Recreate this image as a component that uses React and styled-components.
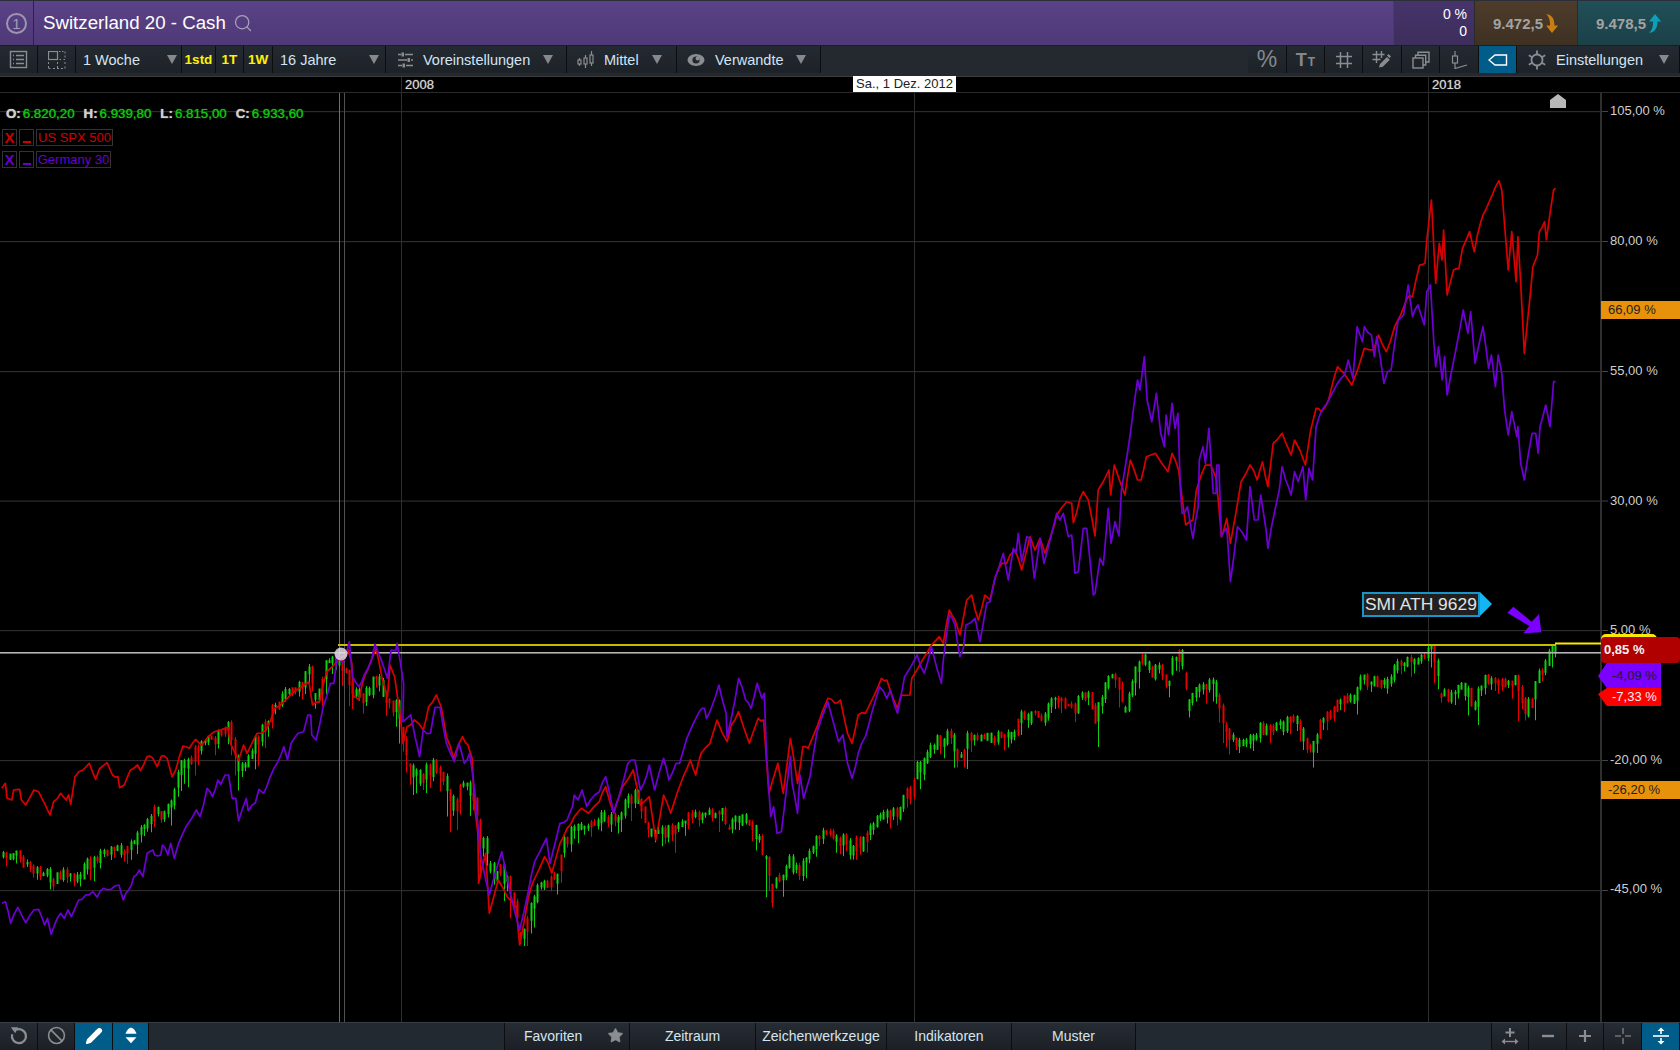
import React from "react";
import styled, { createGlobalStyle } from "styled-components";
import { Pencil, Search, Star, Ban } from "lucide-react";

const Global = createGlobalStyle`
  html, body { margin: 0; padding: 0; background: #000; overflow: hidden; }
  body { font-family: "Liberation Sans", Arial, sans-serif; }
  * { box-sizing: border-box; }
`;

const Page = styled.div`
  width: 1680px; height: 1050px; display: flex; flex-direction: column; background: #000; overflow: hidden;
`;

/* ---------- header ---------- */
const Header = styled.header`
  height: 46px; flex: none; display: flex; align-items: stretch;
  border-top: 1px solid #2b2f3a; border-bottom: 1px solid #1b1e24;
  background: linear-gradient(#5b4287, #4e3976);
`;
const CircleCell = styled.div`
  width: 34px; display: flex; align-items: center; justify-content: center; border-right: 1px solid #2c2340;
`;
const CircleNum = styled.div`
  width: 21px; height: 21px; border-radius: 50%; border: 2px solid #9d96b0; color: #a49db6;
  font-size: 15px; display: flex; align-items: center; justify-content: center;
`;
const Title = styled.div`
  margin-left: 9px; color: #fff; font-size: 18.7px; line-height: 44px;
`;
const SearchWrap = styled.div`
  margin-left: 7px; display: flex; align-items: center; color: #a9a2bb;
`;
const Spacer = styled.div`flex: 1;`;
const Qty = styled.div`
  width: 81px; background: linear-gradient(#46346a, #3d2e5c); color: #fff; font-size: 14px; line-height: 17px;
  display: flex; flex-direction: column; justify-content: center; align-items: flex-end; padding-right: 7px;
  border-left: 1px solid #4a3a70;
`;
const Price = styled.div`
  display: flex; align-items: center; justify-content: center; gap: 2px;
  width: ${p => p.$w}px; border-left: 1px solid #2a2a2a;
  background: ${p => p.$buy ? "linear-gradient(#215058, #1b4048)" : "linear-gradient(#4f3c2b, #3d3122)"};
  color: #a3a3a3; font-size: 15px; font-weight: bold;
`;

/* ---------- toolbar ---------- */
const Toolbar = styled.nav`
  height: 30px; flex: none; display: flex; align-items: flex-start; background: #23292f;
`;
const ToolBtn = styled.div`
  width: ${p => p.$w}px; height: 27px; flex: none; display: flex; align-items: center;
  justify-content: ${p => p.$left ? "flex-start" : "center"};
  padding-left: ${p => p.$pl || 0}px; gap: ${p => p.$gap || 0}px;
  border-right: 1px solid #0b0d10; position: relative;
  background: ${p => p.$active ? "#005c88" : "linear-gradient(#242a31, #1d2227)"};
  color: #d3e4f2; font-size: 14.5px;
`;
const YellowLabel = styled.span`
  color: #fff200; font-size: 13.5px; font-weight: bold;
`;
const Caret = styled.span`
  position: absolute; right: ${p => p.$r || 8}px; top: 9px; width: 0; height: 0;
  border-left: 5px solid transparent; border-right: 5px solid transparent; border-top: 9px solid #85898d;
`;
const ToolSpacer = styled.div`flex: 1; height: 27px;`;
const GrayGlyph = styled.span`
  color: #85898d; font-size: ${p => p.$s || 20}px; font-weight: ${p => p.$b ? "bold" : "normal"}; line-height: 1;
`;
const SmallT = styled.span`font-size: 12px; margin-left: 1px;`;

/* ---------- time row ---------- */
const TimeRow = styled.div`
  height: 17px; flex: none; position: relative; background: #000;
  border-top: 1px solid #3c3c3c; border-bottom: 1px solid #2b2b2b;
`;
const TimeLabel = styled.span`
  position: absolute; left: ${p => p.$x}px; top: 0; height: 15px; padding-left: 3px; border-left: 1px solid #2b2b2b;
  color: #d4d4d4; font-size: 13px; line-height: 15px; text-shadow: 0 0 1px #aaa;
`;
const DateTag = styled.span`
  position: absolute; left: 853px; top: -1px; width: 103px; height: 16px; background: #fff; color: #222;
  font-size: 13px; line-height: 16px; text-align: center; z-index: 2; white-space: nowrap;
`;

/* ---------- chart ---------- */
const Chart = styled.main`
  position: relative; flex: 1; min-height: 0; background: #000; overflow: hidden;
`;
const ChartSvg = styled.svg`position: absolute; left: 0; top: 0; filter: blur(0.4px);`;
const Ohlc = styled.div`
  position: absolute; left: 6px; top: 13px; display: flex; gap: 9px; font-size: 13.3px; line-height: 16px;
  text-shadow: 0 0 1px currentColor;
`;
const OhlcPair = styled.span`display: flex; gap: 2px;`;
const OhlcKey = styled.b`color: #d0d0d0;`;
const OhlcVal = styled.span`color: #12c412;`;
const LegendRow = styled.div`
  position: absolute; left: 2px; top: ${p => p.$top}px; display: flex; gap: 2px; height: 17px; color: ${p => p.$c};
`;
const LegendBox = styled.div`
  width: ${p => p.$w}px; height: 17px; border: 1px solid #333; font-size: 13px; line-height: 15px;
  text-align: center; white-space: nowrap; overflow: hidden;
`;
const LegendX = styled(LegendBox)`
  font-size: 15px; font-weight: bold;
`;
const LegendDash = styled(LegendBox)`
  display: flex; align-items: flex-end; justify-content: center; padding-bottom: 2px;
  &::after { content: ""; width: 8px; height: 2px; background: currentColor; }
`;
const AxisLabel = styled.span`
  position: absolute; left: 1610px; top: ${p => p.$y - 93 - 8}px; color: #cfcfcf; font-size: 13px; line-height: 16px;
`;
const ValueTag = styled.div`
  position: absolute; left: ${p => p.$x}px; top: ${p => p.$y - 93}px; width: ${p => p.$w}px; height: ${p => p.$h}px;
  background: ${p => p.$bg}; color: ${p => p.$fg}; font-size: 13px; line-height: ${p => p.$h}px;
  padding-left: ${p => p.$pl}px; font-weight: ${p => p.$b ? "bold" : "normal"}; border-radius: ${p => p.$r || 0}px;
  clip-path: ${p => p.$arrow ? `polygon(0 ${p.$tip}px, 14% 0, 100% 0, 100% 100%, 14% 100%)` : "none"};
`;
const YellowTab = styled.div`
  position: absolute; left: 1601px; top: ${634 - 93}px; width: 56px; height: 8px; background: #ffe800; border-radius: 5px 5px 0 0;
`;
const Note = styled.div`
  position: absolute; left: 1362px; top: ${592 - 93}px; height: 25px; display: flex; align-items: stretch;
`;
const NoteText = styled.div`
  width: 118px; border: 2px solid #1894c8; background: #202020; color: #e2e2e2; font-size: 17.4px; line-height: 21px;
  padding-left: 1px; white-space: nowrap; overflow: hidden;
`;
const NoteArrow = styled.div`
  width: 0; height: 0; border-top: 12.5px solid transparent; border-bottom: 12.5px solid transparent; border-left: 12px solid #12b6f2;
`;

/* ---------- bottom bar ---------- */
const Bottom = styled.footer`
  height: 28px; flex: none; display: flex; align-items: stretch; background: #232930; border-top: 1px solid #3a3f45;
`;
const BottomBtn = styled.div`
  width: ${p => p.$w}px; flex: none; display: flex; align-items: center; justify-content: ${p => p.$sb ? "space-between" : "center"};
  padding: 0 ${p => p.$sb ? 5 : 0}px 2px ${p => p.$sb ? 19 : 0}px;
  border-right: 1px solid #0b0d10;
  background: ${p => p.$active ? "#005c88" : "linear-gradient(#262c33, #1c2026)"};
  color: ${p => p.$active ? "#fff" : "#8a8e92"}; font-size: 14px;
`;
const BtnText = styled.span`color: #d5e4f0;`;
const BottomGap = styled.div`width: ${p => p.$w}px; flex: none; border-right: 1px solid #0b0d10;`;
const BottomFill = styled.div`flex: 1; border-right: 1px solid #0b0d10;`;

/* ---------- chart data, traced from the picture ---------- */
const conv = (arr, sx, ox, oy) => {
  const out = [];
  for (let i = 0; i < arr.length; i += 2) out.push([arr[i] / sx + ox, arr[i + 1] / 3 + oy]);
  return out;
};
const Z8 = a => conv(a, 2.8, 0, 620);
const Z10 = a => conv(a, 2.8, 560, 620);
const Z11 = a => conv(a, 3, 900, 460);
const Z9 = a => conv(a, 2.8, 1000, 170);
const Z12 = a => conv(a, 3, 1120, 620);
const Z4 = a => conv(a, 3, 1340, 580);

const rng = seed => () => {
  seed = (seed + 0x6d2b79f5) | 0;
  let t = Math.imul(seed ^ (seed >>> 15), 1 | seed);
  t = (t + Math.imul(t ^ (t >>> 7), 61 | t)) ^ t;
  return ((t ^ (t >>> 14)) >>> 0) / 4294967296;
};

const redPts = [
  ...Z8([5,505,15,490,20,535,33,540,38,510,55,508,60,540,72,555,95,510,108,515,125,550,140,585,150,545,170,520,185,540,192,525,198,553,210,470,232,450,250,430,268,478,278,447,300,428,315,465,330,470,335,503,348,495,365,450,385,435,393,452,412,410,428,415,440,440,452,408,468,415,482,470,492,450,512,378,530,385,548,358,565,375,600,335,638,322,645,370,668,420,682,375,692,400,703,375,720,340,745,330,770,265,800,240,830,210,865,185,875,255,895,245,915,155,950,115,975,90,985,130,990,230,1005,240,1020,170,1040,120,1053,85,1070,175,1085,230,1092,135,1105,170,1120,280,1128,370,1140,320,1160,300,1185,330,1200,260,1222,225,1235,260,1250,350,1270,415,1295,350,1310,375,1322,415,1328,550,1338,640,1340,790,1360,700,1370,880,1395,780,1420,830,1445,860,1455,975,1480,830,1495,780,1525,710,1545,760,1568,670]),
  ...Z10([20,625,40,590,60,565,80,580,110,545,128,500,150,580,175,500,205,450,225,555,250,530,268,660,290,525,310,580,345,470,365,420,380,465,395,400,420,370,440,300,468,365,480,315,500,275,530,370,555,295,570,300,585,520,610,430,625,520,645,355,665,490,680,380,695,385,720,320,750,235,770,250,785,240,805,340,818,370,835,285,855,280,880,225,900,175,915,180,945,265,955,225,980,225,985,175,1015,120,1040,75]),
  ...Z11([118,530,130,550,148,450,165,480,180,525,200,420,215,405,235,480,255,405,270,420,285,355,305,310,320,310,330,285,345,270,365,330,390,230,405,270,420,235,435,280,450,235,470,165,500,125,515,130,520,188,540,115,550,95,565,120,585,228]),
  ...Z9([275,960,305,900,310,975,320,885,350,975,365,870,385,930,395,930,410,860,435,850,470,905,482,850,500,900,520,1065,540,1050,550,960,575,885,590,885,605,925,620,1100,635,1045,645,1120,675,935,700,885,720,930,735,875,750,950,765,820,790,790,815,855,825,810,855,885,870,780,885,715,900,725,920,690,945,590,985,645,1020,535,1045,540,1060,495,1082,545,1105,470,1140,385,1155,380,1175,285,1190,280,1195,210,1208,90,1220,340,1230,220,1238,270,1242,180,1252,375,1270,300,1285,295,1295,235,1315,185,1328,245,1345,160,1360,120,1380,70,1397,32,1405,60,1415,195,1423,300,1433,185,1445,335,1450,200,1458,340,1468,550,1485,370,1492,290,1505,255,1510,185,1525,155,1530,210,1540,130,1550,60,1556,55]),
];

const purplePts = [
  ...Z8([5,850,15,845,30,910,50,862,72,908,95,870,108,868,125,915,133,895,143,943,155,908,170,880,180,895,190,870,200,890,220,840,240,825,260,815,272,832,290,805,310,808,333,795,345,840,360,810,375,770,390,750,400,770,412,700,428,690,433,705,450,705,455,675,470,705,478,670,488,715,500,670,520,622,550,570,560,590,580,505,595,530,610,480,618,493,630,465,640,465,650,535,660,535,668,603,690,535,695,572,715,548,725,508,738,520,755,475,778,425,795,380,805,420,815,370,835,340,850,335,862,285,870,285,873,345,885,360,905,260,925,190,935,190,945,100,960,130,978,65,987,170,1005,200,1020,165,1040,120,1050,72,1085,175,1095,90,1108,92,1112,70,1130,190,1128,305,1150,285,1175,410,1185,330,1205,340,1218,262,1232,262,1250,370,1272,425,1285,370,1300,430,1315,400,1330,520,1345,700,1370,825,1405,695,1425,800,1455,930,1480,810,1497,725,1530,655,1540,730,1568,610]),
  ...Z10([20,600,35,560,40,525,50,540,62,510,75,560,85,540,110,515,128,470,150,580,165,530,190,430,210,420,225,510,235,490,250,435,265,510,290,415,305,480,325,430,335,430,355,355,390,275,405,265,410,295,425,260,445,195,465,280,468,350,490,240,500,175,520,240,535,265,552,190,565,235,572,220,578,400,590,590,598,560,608,640,620,635,635,500,645,410,650,490,665,580,672,465,682,535,700,470,720,335,750,245,780,365,792,345,805,430,818,475,835,400,855,350,875,270,895,200,915,235,925,210,945,280,965,170,1000,105,1020,160,1040,80,1068,190]),
  ...Z11([130,600,148,465,165,495,172,545,180,590,190,565,198,495,225,475,240,545,260,430,270,425,285,355,310,280,325,360,340,265,348,280,355,220,365,305,380,230,390,235,403,355,420,235,432,310,450,240,470,160,480,180,490,160,505,230,515,225,525,340,535,335,550,205,560,205,580,405,585,400,600,295,610,315,625,145,633,250,645,185,657,228]),
  ...Z9([340,960,358,840,365,790,385,630,392,660,404,560,412,690,425,755,438,670,450,790,460,830,465,735,472,795,482,700,490,775,498,730,505,960,510,1030,525,1010,540,1105,555,1010,558,870,568,830,575,880,585,775,597,970,605,970,607,885,613,885,620,1100,635,1075,645,1235,665,1070,690,1110,700,950,712,1050,722,1050,730,975,745,1080,750,1135,770,1020,782,960,790,890,800,930,815,975,825,905,835,935,848,890,856,990,865,895,875,930,885,770,905,715,925,680,945,640,965,615,975,570,988,625,1000,470,1015,515,1020,470,1040,495,1048,560,1055,500,1075,640,1085,605,1095,600,1115,450,1130,435,1143,345,1155,440,1170,405,1188,465,1195,365,1205,345,1215,520,1220,590,1228,530,1238,630,1245,560,1252,675,1265,600,1280,520,1297,420,1310,490,1318,425,1330,580,1352,470,1368,595,1376,555,1387,650,1395,555,1405,610,1413,720,1423,795,1433,725,1447,800,1450,770,1458,880,1468,930,1490,790,1500,790,1507,850,1512,770,1528,705,1540,770,1550,635,1556,635]),
];

const candleTrace = [
  ...Z8([5,700,50,705,75,735,120,755,150,785,175,755,205,775,240,735,270,715,300,680,345,690,380,640,400,630,425,570,450,580,475,520,490,525,500,450,530,405,570,370,620,335,640,330,650,400,672,445,700,405,720,340,750,290,770,240,800,220,840,200,860,130,880,230,910,130,950,110,970,150,1000,225,1015,230,1050,170,1080,250,1105,250,1115,300,1135,420,1178,480,1215,425,1250,480,1272,560,1300,490,1325,500,1345,660,1360,720,1375,760,1405,750,1430,820,1455,960,1490,810,1530,780,1568,760]),
  ...Z10([0,680,30,635,80,610,130,580,155,610,180,530,210,530,240,620,270,640,310,630,345,600,370,580,415,585,445,560,470,620,490,600,515,585,540,640,575,710,582,830,600,790,640,720,670,750,700,670,750,625,780,645,815,700,860,620,900,590,950,570,985,500,1005,430,1050,375,1090,320,1115,410,1140,345,1200,345,1250,350,1290,290,1345,285,1380,240,1440,260,1475,210,1500,300,1530,160,1565,180]),
  ...Z12([0,260,20,250,50,150,70,110,95,160,115,130,140,190,160,110,178,100,195,240,240,190,270,190,295,260,320,320,345,370,385,360,420,320,470,320,510,295,550,345,565,380,590,320,610,280,640,280,670,230,700,230,715,170,770,180,800,180,840,130,890,120,920,90,940,100,950,190,980,230,1020,190,1060,250,1090,160,1130,190,1170,180,1195,190]),
  ...Z4([555,400,575,340,600,260,620,220,645,205]),
];

const densify = (pts, seed, amp) => {
  const r = rng(seed);
  const out = [pts[0]];
  for (let i = 1; i < pts.length; i++) {
    const [ax, ay] = pts[i - 1];
    const [bx, by] = pts[i];
    if (bx - ax > 5) out.push([(ax + bx) / 2, (ay + by) / 2 + (r() - 0.5) * amp]);
    out.push([bx, by]);
  }
  return out;
};
const toLine = pts => pts.map(p => `${p[0].toFixed(1)},${p[1].toFixed(1)}`).join(" ");

const interp = (tr, x) => {
  for (let i = 1; i < tr.length; i++) {
    if (x <= tr[i][0]) {
      const [ax, ay] = tr[i - 1];
      const [bx, by] = tr[i];
      return ay + ((by - ay) * (x - ax)) / Math.max(bx - ax, 0.01);
    }
  }
  return tr[tr.length - 1][1];
};

const buildCandles = () => {
  const r = rng(77);
  let green = "", red = "";
  let prev = interp(candleTrace, 2);
  for (let x = 3; x < 1556; x += 3.36) {
    const slope = Math.abs(interp(candleTrace, x + 6) - interp(candleTrace, x - 6));
    const y = interp(candleTrace, x) + (r() - 0.5) * (8 + slope * 0.4);
    const up = y < prev ? r() < 0.85 : r() < 0.3;
    const bodyH = Math.min(Math.abs(y - prev), 14) + 1.5 + r() * 4;
    const top = Math.min(y, prev) - 0.5;
    const wickT = top - r() * 2.5;
    const wickB = Math.min(top + bodyH + r() * r() * (14 + slope * 0.8), 946);
    const bx = Math.round(x);
    const d = `M${bx} ${wickT.toFixed(1)}h1V${wickB.toFixed(1)}h-1ZM${bx - 0.5} ${top.toFixed(1)}h2v${Math.min(bodyH, wickB - top).toFixed(1)}h-2Z`;
    if (up) green += d; else red += d;
    prev = y;
  }
  return { green, red };
};

const candles = buildCandles();
const redLine = toLine(densify(redPts, 11, 4));
const purpleLine = toLine(densify(purplePts, 23, 4));

const gridY = [111, 241, 371, 500.5, 630, 760, 890];
const axisLabels = [["105,00 %", 111], ["80,00 %", 241], ["55,00 %", 371], ["30,00 %", 501], ["5,00 %", 630], ["-20,00 %", 760], ["-45,00 %", 889]];
const arrowPts = conv([502,98,520,80,575,125,597,102,604,157,550,160,568,138], 3, 1340, 580).map(p => p.join(",")).join(" ");

/* ---------- icons ---------- */
const G = "#8a8e92";
const ListIcon = () => (
  <svg width="19" height="19" viewBox="0 0 19 19" fill="none" stroke={G}>
    <rect x="1.5" y="1.5" width="16" height="16" strokeWidth="1.4" />
    <path d="M4 5.5h1M4 9.5h1M4 13.5h1M7 5.5h8M7 9.5h8M7 13.5h8" strokeWidth="1.3" />
  </svg>
);
const LayoutIcon = () => (
  <svg width="18" height="18" viewBox="0 0 18 18" fill="none" stroke={G}>
    <rect x="0.5" y="0.5" width="9" height="8" strokeWidth="1.2" />
    <path d="M11 .5h1.5M14 .5h1.5M17 .5v2M17 4.5v2M17 8.5h-1.5M13 8.5h-1.5M.5 11v2M.5 15v2M.5 17.5h2M5 17.5h2M9 17.5h2M13 17.5h2M17 17.5v-2M17 13v-2M9.5 11v2M9.5 15v2" strokeWidth="1" />
  </svg>
);
const SlidersIcon = () => (
  <svg width="18" height="18" viewBox="0 0 18 18" stroke={G} fill={G}>
    <path d="M2 3.5h3M9 3.5h8M2 9h9M15 9h2M2 14.5h4M10 14.5h7" strokeWidth="1.6" />
    <rect x="5.5" y="1.5" width="2.5" height="4" stroke="none" />
    <rect x="11.5" y="7" width="2.5" height="4" stroke="none" />
    <rect x="6.5" y="12.5" width="2.5" height="4" stroke="none" />
  </svg>
);
const CandlesIcon = () => (
  <svg width="18" height="18" viewBox="0 0 18 18" fill="none" stroke={G} strokeWidth="1.2">
    <path d="M2.5 7v2M2.5 13v2M8.5 4v3M8.5 13v4M14.5 0v4M14.5 12v3" />
    <rect x="1" y="9" width="3" height="4" />
    <rect x="7" y="7" width="3" height="6" />
    <rect x="13" y="4" width="3" height="8" />
  </svg>
);
const EyeIcon = () => (
  <svg width="18" height="14" viewBox="0 0 18 14">
    <ellipse cx="9" cy="7" rx="8.5" ry="6" fill={G} />
    <circle cx="9" cy="7" r="3.6" fill="#23282e" />
    <circle cx="10.6" cy="5.6" r="2" fill={G} />
  </svg>
);
const HashIcon = () => (
  <svg width="18" height="18" viewBox="0 0 18 18" stroke={G} strokeWidth="1.5">
    <path d="M5.5 1v16M12.5 1v16M1 5.5h16M1 12.5h16" />
  </svg>
);
const HashPenIcon = () => (
  <svg width="20" height="18" viewBox="0 0 20 18" fill="none" stroke={G} strokeWidth="1.4">
    <path d="M4.5 0v12M9.5 0v7M0.5 3.5h12M0.5 8.5h8" />
    <path d="M7 16.5l1-3.5 7-7 2.8 2.8-7 7z" fill={G} stroke="none" />
    <path d="M15 4.5l1.5-1.5 2.5 2.5-1.5 1.5z" fill={G} stroke="none" />
  </svg>
);
const StackIcon = () => (
  <svg width="18" height="18" viewBox="0 0 18 18" fill="none" stroke={G} strokeWidth="1.4">
    <rect x="1" y="7" width="10" height="10" />
    <path d="M3.5 7V4.2h10.2V14H11" />
    <path d="M6 4V1.2h11V11h-3" />
  </svg>
);
const CandleLineIcon = () => (
  <svg width="20" height="18" viewBox="0 0 20 18" fill="none" stroke={G} strokeWidth="1.2">
    <path d="M6 0v5M6 12v5.5L18 14" />
    <rect x="3.5" y="5" width="5" height="7" />
  </svg>
);
const TagIcon = () => (
  <svg width="20" height="12" viewBox="0 0 20 12" fill="none" stroke="#fff" strokeWidth="1.4">
    <path d="M1 6 L7 1 H18.5 V11 H7Z" />
  </svg>
);
const GearIcon = () => (
  <svg width="20" height="20" viewBox="0 0 20 20" fill="none" stroke={G} strokeWidth="1.8">
    <circle cx="10" cy="10" r="5.5" />
    <path d="M10 .5v4M10 15.5v4M1.8 5.2l3.4 2M14.8 12.8l3.4 2M1.8 14.8l3.4-2M14.8 7.2l3.4-2" />
  </svg>
);
const SellArrow = () => (
  <svg width="14" height="19" viewBox="0 0 14 20" fill="#c97d12">
    <path d="M1 0 C7 1 9.6 5 9.6 12 L13.5 12 L7 20 L.8 12 L5 12 C5 7 4 3 1 0Z" />
  </svg>
);
const BuyArrow = () => (
  <svg width="14" height="19" viewBox="0 0 14 20" fill="#0f9fb8">
    <path d="M1 20 C7 19 9.6 15 9.6 8 L13.5 8 L7 0 L.8 8 L5 8 C5 13 4 17 1 20Z" />
  </svg>
);
const RefreshIcon = () => (
  <svg width="18" height="19" viewBox="0 0 18 19" fill="none" stroke={G} strokeWidth="2.2">
    <path d="M6 3.8 A7 7 0 1 1 2.2 8.2" />
    <path d="M0.8 1.2 L8.2 1.2 L5.2 7.2Z" fill={G} stroke="none" />
  </svg>
);
const SortIcon = () => (
  <svg width="14" height="17" viewBox="0 0 14 17" fill="#fff">
    <path d="M1.5 6.8 C2.5 3.5 5 .8 7 .8 C9 .8 11.5 3.5 12.5 6.8Z" />
    <path d="M1.5 10.2 H12.5 L7 16.2Z" />
  </svg>
);
const MoveIcon = () => (
  <svg width="18" height="18" viewBox="0 0 18 18" fill={G} stroke={G}>
    <path d="M9 1v9M4.5 5.5h9" strokeWidth="2" />
    <path d="M2 14.5h14" strokeWidth="1.4" />
    <path d="M.5 14.5L4 11.5v6zM17.5 14.5L14 11.5v6z" stroke="none" />
  </svg>
);
const MinusIcon = () => (
  <svg width="14" height="14" viewBox="0 0 14 14" stroke={G} strokeWidth="2.4"><path d="M1 7h12" /></svg>
);
const PlusIcon = () => (
  <svg width="14" height="14" viewBox="0 0 14 14" stroke={G} strokeWidth="2.2"><path d="M1 7h12M7 1v12" /></svg>
);
const CrossIcon = () => (
  <svg width="18" height="18" viewBox="0 0 18 18" stroke={G} strokeWidth="1.6" opacity=".75">
    <path d="M1 9h6M11 9h6M9 1v6M9 11v6" />
  </svg>
);
const FitIcon = () => (
  <svg width="18" height="18" viewBox="0 0 18 18" fill="#fff" stroke="#fff">
    <path d="M1 9h16" strokeWidth="1.6" />
    <path d="M9 3v4M9 11v4" strokeWidth="1.6" />
    <path d="M5.5 4L9 .5 12.5 4zM5.5 14L9 17.5 12.5 14z" stroke="none" />
  </svg>
);

const Ohl = [["O:", "6.820,20"], ["H:", "6.939,80"], ["L:", "6.815,00"], ["C:", "6.933,60"]];

export default function App() {
  return (
    <Page>
      <Global />
      <Header>
        <CircleCell><CircleNum>1</CircleNum></CircleCell>
        <Title>Switzerland 20 - Cash</Title>
        <SearchWrap><Search size={20} strokeWidth={1.5} /></SearchWrap>
        <Spacer />
        <Qty><span>0 %</span><span>0</span></Qty>
        <Price $w={103}>9.472,5 <SellArrow /></Price>
        <Price $w={103} $buy>9.478,5 <BuyArrow /></Price>
      </Header>

      <Toolbar>
        <ToolBtn $w={38}><ListIcon /></ToolBtn>
        <ToolBtn $w={38}><LayoutIcon /></ToolBtn>
        <ToolBtn $w={106} $left $pl={7}>1 Woche<Caret $r={4} /></ToolBtn>
        <ToolBtn $w={34}><YellowLabel>1std</YellowLabel></ToolBtn>
        <ToolBtn $w={28}><YellowLabel>1T</YellowLabel></ToolBtn>
        <ToolBtn $w={29}><YellowLabel>1W</YellowLabel></ToolBtn>
        <ToolBtn $w={113} $left $pl={7}>16 Jahre<Caret $r={6} /></ToolBtn>
        <ToolBtn $w={181} $left $pl={10} $gap={9}><SlidersIcon />Voreinstellungen<Caret $r={13} /></ToolBtn>
        <ToolBtn $w={110} $left $pl={10} $gap={9}><CandlesIcon />Mittel<Caret $r={14} /></ToolBtn>
        <ToolBtn $w={144} $left $pl={10} $gap={10}><EyeIcon />Verwandte<Caret $r={14} /></ToolBtn>
        <ToolSpacer />
        <ToolBtn $w={39}><GrayGlyph $s={23}>%</GrayGlyph></ToolBtn>
        <ToolBtn $w={38}><GrayGlyph $s={18} $b>T<SmallT>T</SmallT></GrayGlyph></ToolBtn>
        <ToolBtn $w={38}><HashIcon /></ToolBtn>
        <ToolBtn $w={39}><HashPenIcon /></ToolBtn>
        <ToolBtn $w={38}><StackIcon /></ToolBtn>
        <ToolBtn $w={39}><CandleLineIcon /></ToolBtn>
        <ToolBtn $w={38} $active><TagIcon /></ToolBtn>
        <ToolBtn $w={163} $left $pl={10} $gap={9}><GearIcon />Einstellungen<Caret $r={10} /></ToolBtn>
      </Toolbar>

      <TimeRow>
        <TimeLabel $x={401}>2008</TimeLabel>
        <DateTag>Sa., 1 Dez. 2012</DateTag>
        <TimeLabel $x={1428}>2018</TimeLabel>
      </TimeRow>

      <Chart>
        <ChartSvg width="1680" height="929" viewBox="0 93 1680 929">
          {gridY.map(y => <rect key={y} x="0" y={y} width="1601" height="1.2" fill="#2c2c2c" />)}
          {gridY.map(y => <rect key={"t" + y} x="1601" y={y} width="7" height="1" fill="#444" />)}
          <rect x="401" y="93" width="1" height="929" fill="#2e2e2e" />
          <rect x="914" y="93" width="1" height="929" fill="#2e2e2e" />
          <rect x="1428" y="93" width="1" height="929" fill="#2e2e2e" />
          <rect x="339" y="93" width="1" height="929" fill="#6e6e6e" />
          <rect x="344" y="93" width="1" height="929" fill="#505050" />
          <rect x="1600" y="93" width="2" height="929" fill="#2e2e2e" />
          <path d={candles.green} fill="#10d010" />
          <path d={candles.red} fill="#e60000" />
          <rect x="338" y="644" width="1218" height="2" fill="#c4bc00" />
          <rect x="1555" y="642.5" width="46" height="2" fill="#ffe800" />
          <rect x="0" y="652" width="1601" height="1.6" fill="#b4b4b4" />
          <polyline points={redLine} fill="none" stroke="#d80000" strokeWidth="1.7" strokeLinejoin="round" />
          <polyline points={purpleLine} fill="none" stroke="#6e00d4" strokeWidth="1.7" strokeLinejoin="round" />
          <circle cx="341" cy="654" r="6.5" fill="#e0dce0" opacity=".85" />
          <polygon points={arrowPts} fill="#7a00ff" />
          <path d="M1550 108 V100 L1558 94 L1566 100 V108Z" fill="#b8b8b8" />
        </ChartSvg>

        <Ohlc>
          {Ohl.map(([k, v]) => (
            <OhlcPair key={k}><OhlcKey>{k}</OhlcKey><OhlcVal>{v}</OhlcVal></OhlcPair>
          ))}
        </Ohlc>
        <LegendRow $top={36} $c="#d00000">
          <LegendX $w={15}>X</LegendX>
          <LegendDash $w={15} />
          <LegendBox $w={77}>US SPX 500</LegendBox>
        </LegendRow>
        <LegendRow $top={58} $c="#6a00cc">
          <LegendX $w={15}>X</LegendX>
          <LegendDash $w={15} />
          <LegendBox $w={75}>Germany 30</LegendBox>
        </LegendRow>

        {axisLabels.map(([t, y]) => <AxisLabel key={t} $y={y}>{t}</AxisLabel>)}
        <ValueTag $x={1601} $y={301} $w={79} $h={18} $bg="#e8920c" $fg="#222" $pl={7}>66,09 %</ValueTag>
        <ValueTag $x={1601} $y={781} $w={79} $h={18} $bg="#e8920c" $fg="#222" $pl={7}>-26,20 %</ValueTag>
        <YellowTab />
        <ValueTag $x={1601} $y={637} $w={79} $h={26} $bg="#b00000" $fg="#f4f4f4" $pl={3} $r={4} $b>0,85 %</ValueTag>
        <ValueTag $x={1598} $y={663} $w={63} $h={25} $bg="#7a00ff" $fg="#1c1c2c" $pl={14} $arrow $tip={13}>-4,09 %</ValueTag>
        <ValueTag $x={1598} $y={688} $w={63} $h={18} $bg="#ff0000" $fg="#f0f0f0" $pl={14} $arrow $tip={6}>-7,33 %</ValueTag>

        <Note>
          <NoteText>SMI ATH 9629</NoteText>
          <NoteArrow />
        </Note>
      </Chart>

      <Bottom>
        <BottomBtn $w={38}><RefreshIcon /></BottomBtn>
        <BottomBtn $w={37}><Ban size={19} strokeWidth={2} /></BottomBtn>
        <BottomBtn $w={38} $active><Pencil size={18} fill="#fff" strokeWidth={1.5} /></BottomBtn>
        <BottomBtn $w={36} $active><SortIcon /></BottomBtn>
        <BottomGap $w={356} />
        <BottomBtn $w={125} $sb><BtnText>Favoriten</BtnText><Star size={17} fill="#8a8e92" strokeWidth={1} /></BottomBtn>
        <BottomBtn $w={126}><BtnText>Zeitraum</BtnText></BottomBtn>
        <BottomBtn $w={131}><BtnText>Zeichenwerkzeuge</BtnText></BottomBtn>
        <BottomBtn $w={125}><BtnText>Indikatoren</BtnText></BottomBtn>
        <BottomBtn $w={124}><BtnText>Muster</BtnText></BottomBtn>
        <BottomFill />
        <BottomBtn $w={37}><MoveIcon /></BottomBtn>
        <BottomBtn $w={38}><MinusIcon /></BottomBtn>
        <BottomBtn $w={37}><PlusIcon /></BottomBtn>
        <BottomBtn $w={38}><CrossIcon /></BottomBtn>
        <BottomBtn $w={38} $active><FitIcon /></BottomBtn>
      </Bottom>
    </Page>
  );
}
